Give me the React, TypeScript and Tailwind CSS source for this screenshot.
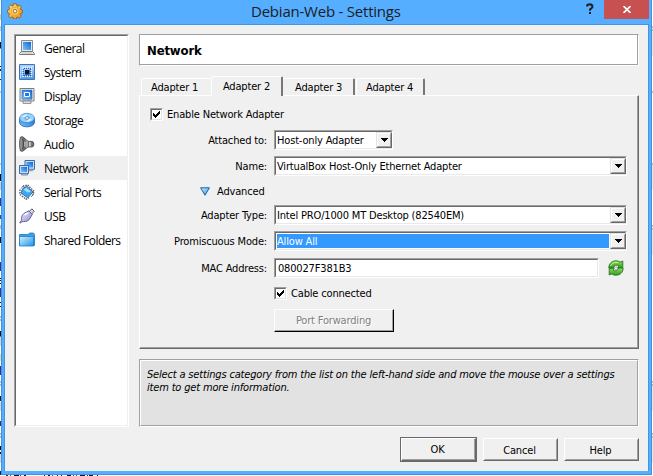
import type { ReactNode } from 'react';

const ui = "font-['DejaVu_Sans_Condensed','DejaVu_Sans',sans-serif] text-[11px] tracking-[-0.17px] whitespace-nowrap";
const segoe = "font-['Open_Sans','Noto_Sans',sans-serif] whitespace-nowrap";

function Gradients() {
  return (
    <svg width="0" height="0" className="absolute">
      <defs>
        <linearGradient id="blue" x1="0" y1="1" x2="1" y2="0">
          <stop offset="0" stopColor="#7cc4f8" />
          <stop offset="1" stopColor="#0a67d8" />
        </linearGradient>
        <linearGradient id="pale" x1="0" y1="0" x2="0" y2="1">
          <stop offset="0" stopColor="#c4e2fb" />
          <stop offset="1" stopColor="#4d97dd" />
        </linearGradient>
        <linearGradient id="folder" x1="0" y1="0" x2="1" y2="1">
          <stop offset="0" stopColor="#d4f2ff" />
          <stop offset="1" stopColor="#1d93ec" />
        </linearGradient>
        <linearGradient id="grey" x1="0" y1="0" x2="1" y2="0">
          <stop offset="0" stopColor="#a8a8a8" />
          <stop offset=".35" stopColor="#666" />
          <stop offset=".6" stopColor="#e4e4e4" />
          <stop offset="1" stopColor="#777" />
        </linearGradient>
        <linearGradient id="gold" x1="0" y1="0" x2="1" y2="1">
          <stop offset="0" stopColor="#ffe27a" />
          <stop offset="1" stopColor="#f08a10" />
        </linearGradient>
        <linearGradient id="violet" x1="0" y1="0" x2="1" y2="1">
          <stop offset="0" stopColor="#f4f4ff" />
          <stop offset="1" stopColor="#8686cc" />
        </linearGradient>
        <linearGradient id="green" x1="0" y1="0" x2="0" y2="1">
          <stop offset="0" stopColor="#8fe05e" />
          <stop offset="1" stopColor="#2f9a20" />
        </linearGradient>
      </defs>
    </svg>
  );
}

const Icon = ({ children }: { children: ReactNode }) => (
  <svg width="16" height="16" viewBox="0 0 16 16" className="shrink-0">
    {children}
  </svg>
);

const GearIcon = () => (
  <Icon>
    <path
      d="M6.5 .8h3l.4 1.9 1 .5 1.8-1.1 1.9 2-1.1 1.7.4 1.1 1.7.5v2.4l-1.8.5-.5 1.2 1 1.7-2 1.9-1.6-1-1.2.4-.4 1.6H6.7l-.5-1.7-1.1-.5-1.8 1-1.8-1.9 1-1.7-.5-1.1L.4 9.6V7.2l1.7-.5.5-1.2-1-1.6 1.9-1.9 1.6 1 1.1-.4z"
      fill="url(#gold)"
      stroke="#985a12"
      strokeWidth=".9"
    />
    <circle cx="8" cy="8.2" r="3.9" fill="#ffd45c" stroke="#ed981f" strokeWidth=".7" />
    <circle cx="8" cy="8.2" r="1.8" fill="#f3f3ef" stroke="#8d662c" strokeWidth=".9" />
  </Icon>
);

const categories: { name: string; icon: ReactNode }[] = [
  {
    name: 'General',
    icon: (
      <Icon>
        <path d="M2.5.5h11v11h-11z" fill="#e8e8e8" stroke="#8a8a8a" />
        <path d="M4 2h8v8H4z" fill="url(#blue)" />
        <path d="M2.5 11.5h11l2 2v1H.5v-1z" fill="#f1f1f1" stroke="#777" />
        <path d="M2.5 13h11" stroke="#bbb" />
      </Icon>
    ),
  },
  {
    name: 'System',
    icon: (
      <Icon>
        <path d="M.5.5h15v15H.5z" fill="url(#pale)" stroke="#3f72bd" />
        <path d="M1.5 14.5v-13h13" fill="none" stroke="#a9d1fa" />
        <path d="M3.5 4v9M12.5 4v9M4 3.5h9M4 12.5h9" stroke="#e9f5ff" strokeDasharray="1 1" />
        <path d="M5 4.5h7M5 11.5h7M4.5 5v7M11.5 5v7" stroke="#2465c4" strokeDasharray="1 1" />
        <path d="M6 6h4.5v4.5H6z" fill="#08152c" />
      </Icon>
    ),
  },
  {
    name: 'Display',
    icon: (
      <Icon>
        <path d="M1 .5h14v12.5H1z" fill="#eee" stroke="#7c7c7c" />
        <path d="M3 2.2h10v9H3z" fill="url(#blue)" stroke="#185bbd" strokeWidth=".6" />
        <path d="M5.5 4.5h5v4h-5z" fill="#2677d9" stroke="#fff" />
        <path d="M4 13h8v2.4H4z" fill="#e6e6e6" stroke="#777" strokeWidth=".8" />
      </Icon>
    ),
  },
  {
    name: 'Storage',
    icon: (
      <Icon>
        <path d="M.6 6v4.3c0 2.7 3.3 4.5 7.4 4.5s7.4-1.8 7.4-4.5V6z" fill="url(#blue)" stroke="#1d5ca5" strokeWidth=".8" />
        <ellipse cx="8" cy="6" rx="7.4" ry="4.7" fill="#9dd3f8" stroke="#4a8fd0" strokeWidth=".8" />
        <path d="M3 4.6 7 6 8 2z M13 7.4 9 6.3 8 10z" fill="#e2f6ff" />
        <ellipse cx="8" cy="6" rx="2.2" ry="1.3" fill="#e8f7ff" stroke="#2d7fc8" strokeWidth=".8" />
      </Icon>
    ),
  },
  {
    name: 'Audio',
    icon: (
      <Icon>
        <path d="M1.5 1 3.8.8 9 5.3l4.6.2c1.6.5 1.6 5 0 5.4L9 11 3.8 15.2 1.5 15C.3 11 .3 5 1.5 1z" fill="url(#grey)" stroke="#4b4b4b" strokeWidth=".9" />
        <path d="M3.6 2.5c1.1 3.5 1.1 7.500 0 11" fill="none" stroke="#3c3c3c" strokeWidth=".9" />
        <path d="M5.6 5.8c.5 1.400.5 3.200 0 4.600" fill="none" stroke="#cfcfcf" />
        <path d="M9.200 5.500v5.300" stroke="#444" />
        <path d="M13 6v4.600" stroke="#444" strokeWidth=".9" />
      </Icon>
    ),
  },
  {
    name: 'Network',
    icon: (
      <Icon>
        <path d="M6 .5h9.5v8.8H6z" fill="#c6def4" stroke="#3b6ba5" />
        <path d="M7.5 2h6.5v5.5H7.5z" fill="url(#blue)" />
        <path d="M9 9.500h5v1.800H9z" fill="#87a7cc" />
        <path d="M.5 5.500h9v8h-9z" fill="#c6def4" stroke="#3b6ba5" />
        <path d="M2 7h6v5H2z" fill="url(#blue)" />
        <path d="M2.500 13.500h6v1.500h-6z" fill="#c3d7ec" stroke="#57779c" strokeWidth=".8" />
      </Icon>
    ),
  },
  {
    name: 'Serial Ports',
    icon: (
      <Icon>
        <path d="M4 2.5 8.500.8 15.200 7.500 13.500 11M1 5.500.8 10.200 7 15.200 10 13.800" fill="none" stroke="#555" strokeDasharray="1.500 1" strokeWidth="1.300" />
        <path d="M3.800 4.500 7.800 2.200 14 8 8.800 13.800 2 9z" fill="#3fa6ee" stroke="#2a6fb4" />
        <path d="M4.500 5.500 7.500 3.800 12 7.800 8.500 8.500z" fill="#a9dcfb" />
        <path d="m2 4.500 3-3.500M12 13l3-3" stroke="#777" />
      </Icon>
    ),
  },
  {
    name: 'USB',
    icon: (
      <Icon>
        <path d="M10.2 3.500 12.800.8l2.400 2.500-2.600 2.700z" fill="#ddd" stroke="#555" />
        <path d="M4.800 5.500 9.800 2.800l3.500 3.600-3 5c-2.200 2.800-5.800 1.800-7.600 2.500L1 15.200l-.4-.5 1.700-2c.4-1.900-.4-4.700 2.500-7.200z" fill="url(#violet)" stroke="#55558e" strokeWidth=".9" />
        <path d="M5.500 6.800 8.800 5" stroke="#fff" strokeWidth="1.500" />
      </Icon>
    ),
  },
  {
    name: 'Shared Folders',
    icon: (
      <Icon>
        <path d="M.5 2.500h9l1-1.500h4l1 1.500v11H.5z" fill="#3d9fe8" stroke="#2377bb" strokeWidth=".8" />
        <path d="M.5 4.500h14v9.500H.5z" fill="url(#folder)" stroke="#247cc1" strokeWidth=".8" />
      </Icon>
    ),
  },
];

const Check = () => (
  <span className="block size-[13px] shrink-0 border border-t-[#a0a0a0] border-l-[#a0a0a0] border-r-white border-b-white">
    <span className="block size-[11px] border border-t-[#696969] border-l-[#696969] border-r-[#e3e3e3] border-b-[#e3e3e3] bg-white">
      <svg width="9" height="9" viewBox="0 0 9 9" className="block" shapeRendering="crispEdges">
        <path d="M1 3h1v1h1v1h1v-1h1v-1h1v-1h1v-1h1v3h-1v1h-1v1h-1v1h-1v1h-1v-1h-1v-1h-1z" fill="#000" />
      </svg>
    </span>
  </span>
);

function Field({ width, value, combo, selected }: { width: string; value: string; combo?: boolean; selected?: boolean }) {
  return (
    <div className={`${width} h-5 border border-t-[#a0a0a0] border-l-[#a0a0a0] border-r-white border-b-white`}>
      <div className="flex h-[18px] border border-t-[#696969] border-l-[#696969] border-r-[#e9e9e9] border-b-[#e9e9e9] bg-white">
        <div className={`my-px ml-px flex min-w-0 flex-1 items-end ${combo ? 'mr-px' : 'pl-px'} ${selected ? 'bg-[#3399ff] text-white' : ''}`}>
          <span className="leading-[13px]">{value}</span>
        </div>
        {combo && (
          <div className="-mr-px size-4 border border-t-[#e3e3e3] border-l-[#e3e3e3] border-r-[#696969] border-b-[#696969]">
            <div className="flex size-[14px] items-center justify-center border border-t-white border-l-white border-r-[#a0a0a0] border-b-[#a0a0a0] bg-[#f0f0f0]">
              <svg width="7" height="4" viewBox="0 0 7 4" shapeRendering="crispEdges">
                <path d="M0 0h7v1h-1v1h-1v1h-1v1h-1v-1h-1v-1h-1v-1h-1z" />
              </svg>
            </div>
          </div>
        )}
      </div>
    </div>
  );
}

function Row({ label, className, children }: { label: string; className: string; children: ReactNode }) {
  return (
    <div className={`flex h-5 items-center ${className}`}>
      <span className="w-[118px] pt-[2px] text-right">{label}</span>
      <div className="ml-[7px] flex items-center">{children}</div>
    </div>
  );
}

const Tab = ({ name, className }: { name: string; className: string }) => (
  <div className={`flex h-[17px] items-center rounded-t-[2px] border-t border-l border-white pt-[3px] ${className}`}>{name}</div>
);
const rightEdge = 'border-r-2 border-r-[#777777]';

const PushButton = ({ name }: { name: string }) => (
  <div className="h-[23px] w-[75px] border border-t-white border-l-white border-r-[#696969] border-b-[#696969]">
    <div className="flex h-[21px] items-center justify-center border border-t-[#f0f0f0] border-l-[#f0f0f0] border-r-[#a0a0a0] border-b-[#a0a0a0] pt-[3px] pr-[2px]">{name}</div>
  </div>
);

/* Slivers of the window behind the dialog: [offset, length, colour] */
const leftSlivers: [number, number, string][] = [
  [14, 6, '#d9d39c'], [26, 5, '#ccc'], [42, 6, '#15152a'], [48, 1, '#d97b29'], [66, 1, '#222'], [69, 2, '#222'], [79, 1, '#222'], [91, 2, '#ccc'],
  [163, 2, '#ccc'], [174, 7, '#111'], [182, 8, '#ccc'], [198, 8, '#34349a'], [215, 4, '#2b4ba0'], [225, 4, '#bbb'], [237, 6, '#111136'],
  [262, 9, '#34349a'], [278, 1, '#111'], [280, 1, '#111'], [283, 1, '#111'], [288, 9, '#34349a'], [302, 1, '#111'], [306, 1, '#111'],
  [316, 2, '#bbb'], [319, 2, '#bbb'], [331, 5, '#111'], [336, 1, '#c8622b'], [337, 9, '#d5d5d5'], [354, 7, '#eedb91'], [366, 9, '#34349a'],
  [381, 2, '#bbb'], [384, 2, '#bbb'], [396, 5, '#11223a'], [402, 9, '#d5d5d5'], [421, 5, '#2d2d83'], [433, 2, '#bbb'], [436, 2, '#bbb'],
  [446, 4, '#111'], [452, 2, '#111'], [454, 9, '#d5d5d5'], [471, 4, '#1c1c5c'],
];
const rightSlivers: [number, number, string][] = [
  [26, 2, '#bbb'], [29, 2, '#bbb'], [31, 25, '#e6e6e6'], [91, 2, '#bbb'], [163, 2, '#bbb'], [165, 25, '#e6e6e6'], [225, 2, '#bbb'],
  [228, 2, '#bbb'], [230, 25, '#e6e6e6'], [381, 2, '#bbb'], [384, 2, '#bbb'], [386, 25, '#e6e6e6'], [433, 2, '#bbb'], [436, 2, '#bbb'], [438, 25, '#e6e6e6'],
];
const bottomSlivers: [number, number, string][] = [
  [6, 2, '#334'], [10, 1, '#558'], [14, 5, '#111'], [20, 1, '#447'], [24, 2, '#111'], [44, 1, '#224'], [48, 2, '#111'], [52, 1, '#558'],
  [57, 1, '#222'], [61, 1, '#225'], [67, 4, '#112'], [73, 1, '#444'], [76, 1, '#448'], [80, 5, '#112'], [87, 1, '#335'], [89, 4, '#111'], [97, 1, '#112'],
];

const Strip = ({ items }: { items: [number, number, string][] }) => (
  <svg width="1" height="476" viewBox="0 0 1 476" shapeRendering="crispEdges" className="shrink-0">
    {items.map(([y, h, c]) => (
      <rect key={y} x="0" y={y} width="1" height={h} fill={c} />
    ))}
  </svg>
);

export default function App() {
  return (
    <div className={`flex h-[476px] w-[653px] overflow-hidden bg-white text-black ${ui}`}>
      <Gradients />
      <Strip items={leftSlivers} />
      <div className="flex w-[651px] flex-col">
        <div className="flex h-[475px] flex-col border-x border-b border-[#3f94dd] bg-[#55aeff]">
          <header className="flex h-6 items-start">
            <div className="mt-[3px] ml-[5px]">
              <GearIcon />
            </div>
            <h1 className={`${segoe} ml-[228px] w-[160px] text-[15px] leading-[22px] tracking-[-0.22px] text-[#1c1c1c]`}>Debian-Web - Settings</h1>
            <svg width="8" height="12" viewBox="0 0 8 12" className="mt-[3px] ml-[175px]">
              <path d="M1.2 3.4V2.2L2.2 1.4h3l1.100 1v2L4 6.400v1.400M3 10h2" fill="none" stroke="#1c1c1c" strokeWidth="2" />
            </svg>
            <div className="mr-[2px] ml-auto flex h-[19px] w-[45px] items-center justify-center bg-[#c75050]">
              <svg width="8" height="7" viewBox="0 0 8 7">
                <path d="M.5 0 7.500 7M7.500 0 .5 7" stroke="#fff" strokeWidth="1.700" />
              </svg>
            </div>
          </header>

          <div className="mx-[2px] mb-[3px] flex flex-1 border-x border-t border-[#4595dc] bg-[#f0f0f0]">
            <nav className="mt-[9px] ml-[9px] h-[393px] w-[115px] border border-t-[#a0a0a0] border-l-[#a0a0a0] border-r-white border-b-white">
              <ul className="h-[391px] border border-t-[#696969] border-l-[#696969] border-r-[#efefef] border-b-[#efefef] bg-white">
                {categories.map(({ name, icon }) => (
                  <li key={name} className={`flex h-6 items-center pl-[3px] ${name === 'Network' ? 'bg-[#f0f0f0]' : ''}`}>
                    {icon}
                    <span className={`${segoe} ml-[9px] pt-[2px] text-[12px] leading-[22px] tracking-[-0.52px]`}>{name}</span>
                  </li>
                ))}
              </ul>
            </nav>

            <main className="mt-[9px] ml-[10px] flex w-[500px] flex-col">
              <div className="h-8 border border-t-[#a0a0a0] border-l-[#a0a0a0] border-r-white border-b-white">
                <div className="flex h-[30px] items-center border-r border-b border-[#a0a0a0] bg-white pt-[2px] pl-[7px] text-[13px] font-bold tracking-[-0.150px]">Network</div>
              </div>

              <div className="mt-[10px] flex h-[19px] items-end pl-[2px]">
                <Tab name="Adapter 1" className="w-[70px] pl-[9px]" />
                <div className={`relative top-px flex h-[20px] w-[72px] items-center justify-center rounded-t-[2px] border-t border-l border-white bg-[#f0f0f0] pt-[2px] ${rightEdge}`}>Adapter 2</div>
                <Tab name="Adapter 3" className={`w-[72px] border-l-0 pl-[12px] ${rightEdge}`} />
                <Tab name="Adapter 4" className={`ml-px w-[69px] pl-[9px] ${rightEdge}`} />
              </div>

              <section className="h-[254px] border border-t-white border-l-white border-r-[#696969] border-b-[#696969]">
                <div className="h-[252px] border-r border-b border-[#a0a0a0] pt-3 pl-[9px]">
                  <div className="flex h-[13px] items-center gap-1 pl-px">
                    <Check />
                    <span className="pt-[2px]">Enable Network Adapter</span>
                  </div>
                  <Row label="Attached to:" className="mt-[9px]">
                    <Field width="w-[119px]" value="Host-only Adapter" combo />
                  </Row>
                  <Row label="Name:" className="mt-[6px]">
                    <Field width="w-[353px]" value="VirtualBox Host-Only Ethernet Adapter" combo />
                  </Row>
                  <div className="mt-[9px] flex h-3 items-center gap-[7px] pl-[51px]">
                    <svg width="10" height="9" viewBox="0 0 10 9">
                      <path d="M.6.8h8.800L5 8.200z" fill="url(#folder)" stroke="#1b5f9e" strokeLinejoin="round" />
                    </svg>
                    <span className="pt-[2px]">Advanced</span>
                  </div>
                  <Row label="Adapter Type:" className="mt-2">
                    <Field width="w-[353px]" value="Intel PRO/1000 MT Desktop (82540EM)" combo />
                  </Row>
                  <Row label="Promiscuous Mode:" className="mt-[6px]">
                    <Field width="w-[353px]" value="Allow All" combo selected />
                  </Row>
                  <Row label="MAC Address:" className="mt-[7px]">
                    <Field width="w-[325px]" value="080027F381B3" />
                    <svg width="16" height="16" viewBox="0 0 16 16" className="ml-[9px]">
                      <path d="M.8 8C.8 3.500 4 .8 8 .8c1.800 0 3.200.5 4.200 1.300L14.800 1v6.500L9.500 7.800 11 6C9 4.500 6 5 5.500 8z" fill="url(#green)" stroke="#1c6d16" strokeWidth=".8" />
                      <path d="M15.200 8c0 4.500-3.200 7.200-7.200 7.200-1.800 0-3.200-.5-4.200-1.300L1.200 15V8.500L6.500 8.200 5 10c2 1.500 5 1 5.500-2z" fill="url(#green)" stroke="#1c6d16" strokeWidth=".8" />
                      <path d="M2.500 6C3.500 3 7 1.800 10.500 2.800" fill="none" stroke="#c4f2a2" />
                      <path d="M6 8.500 8 6.500l2 1.500-2 1.800z" fill="#f4f4f4" stroke="#777" strokeWidth=".6" />
                    </svg>
                  </Row>
                  <div className="mt-[9px] flex h-[13px] items-center gap-1 pl-[125px]">
                    <Check />
                    <span className="pt-[2px]">Cable connected</span>
                  </div>
                  <div className="mt-[9px] ml-[125px] h-[23px] w-[120px] border border-t-white border-l-white border-r-black border-b-black">
                    <div className="flex h-[21px] items-center justify-center border-r border-b border-[#a0a0a0] pt-[3px] text-[#808080] [text-shadow:1px_1px_0_#fff]">Port Forwarding</div>
                  </div>
                </div>
              </section>

              <div className="mt-[10px] h-[68px] border border-t-[#a0a0a0] border-l-[#a0a0a0] border-r-white border-b-white">
                <div className="h-[66px] border border-t-white border-l-white border-r-[#a0a0a0] border-b-[#a0a0a0] bg-[#e2e2e2] pt-[7px] pl-[6px] leading-[13px] italic">
                  Select a settings category from the list on the left-hand side and move the mouse over a settings
                  <br />
                  item to get more information.
                </div>
              </div>

              <footer className="mt-[10px] flex items-center justify-end gap-[6px]">
                <div className="h-[25px] w-[77px] border border-[#696969]">
                  <div className="h-[23px] border border-t-white border-l-white border-r-[#696969] border-b-[#696969]">
                    <div className="flex h-[21px] items-center justify-center border-r border-b border-[#a0a0a0] pt-[3px] pr-px">OK</div>
                  </div>
                </div>
                <PushButton name="Cancel" />
                <PushButton name="Help" />
              </footer>
            </main>
          </div>
        </div>
        <svg width="651" height="1" viewBox="1 0 651 1" shapeRendering="crispEdges">
          {bottomSlivers.map(([x, w, c]) => (
            <rect key={x} x={x} y="0" width={w} height="1" fill={c} />
          ))}
        </svg>
      </div>
      <Strip items={rightSlivers} />
    </div>
  );
}
